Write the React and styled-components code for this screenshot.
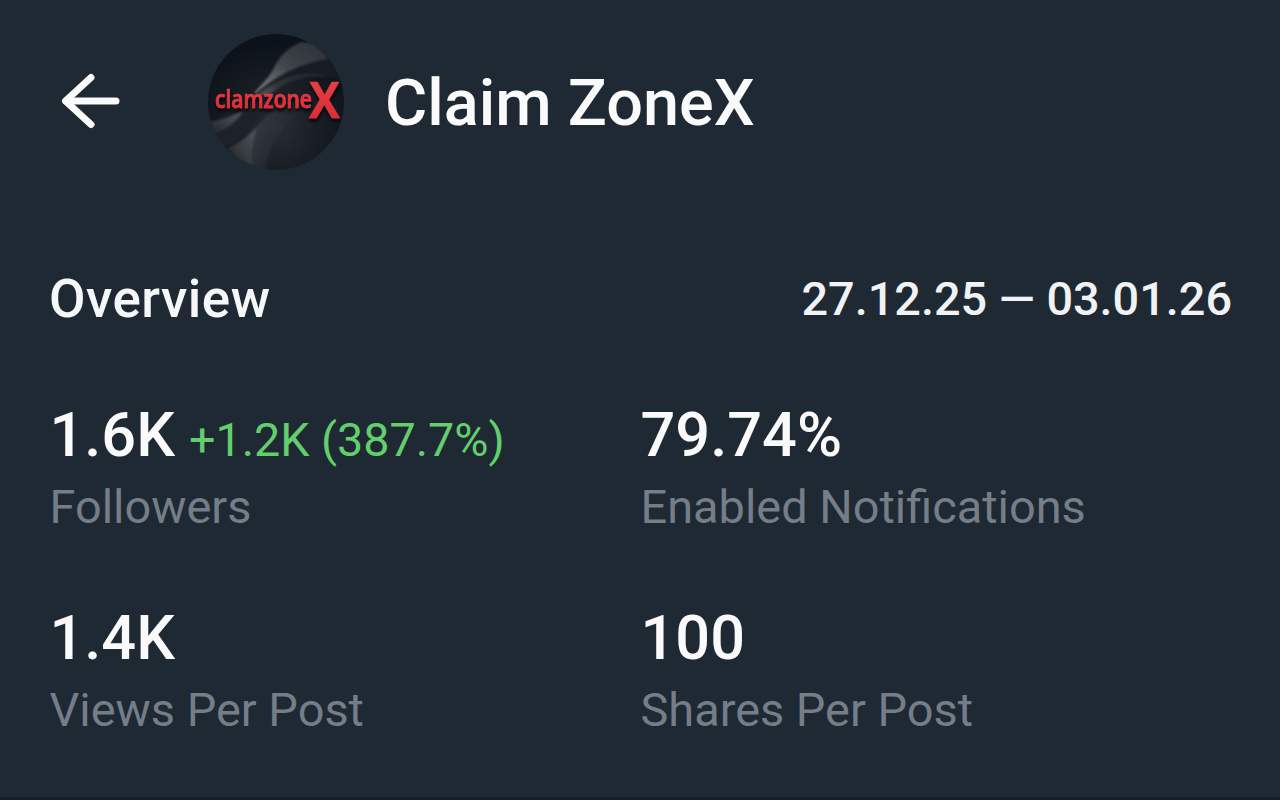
import styled, { createGlobalStyle } from "styled-components";

const stats = [
    { value: "1.6K", delta: "+1.2K (387.7%)", label: "Followers" },
    { value: "79.74%", label: "Enabled Notifications" },
    { value: "1.4K", label: "Views Per Post" },
    { value: "100", label: "Shares Per Post" },
];

const BackArrow = () => (
    <svg width="60" height="56" viewBox="0 0 60 56" fill="none" stroke="#fbfbfb" strokeWidth="7" strokeLinecap="round" strokeLinejoin="round">
        <path d="M31 4.5L5.5 28L31 51.5" />
        <path d="M6 28H56" />
    </svg>
);

const ChannelLogo = () => (
    <svg width="136" height="136" viewBox="0 0 136 136">
        <defs>
            <clipPath id="disc">
                <circle cx="68" cy="68" r="68" />
            </clipPath>
            <radialGradient id="base" cx="0.5" cy="0.68" r="0.62">
                <stop offset="0" stopColor="#292e34" />
                <stop offset="0.5" stopColor="#191e25" />
                <stop offset="1" stopColor="#0c1219" />
            </radialGradient>
            <linearGradient id="ribbon" x1="1" y1="0" x2="0" y2="1">
                <stop offset="0" stopColor="#262c31" />
                <stop offset="0.55" stopColor="#41464b" />
                <stop offset="1" stopColor="#85898c" />
            </linearGradient>
            <linearGradient id="ribbonLow" x1="1" y1="0" x2="0" y2="1">
                <stop offset="0" stopColor="#1e2329" />
                <stop offset="0.6" stopColor="#2d3237" />
                <stop offset="1" stopColor="#55595d" />
            </linearGradient>
            <linearGradient id="fold" x1="1" y1="0" x2="0" y2="1">
                <stop offset="0" stopColor="#555a5f" />
                <stop offset="1" stopColor="#1c2228" />
            </linearGradient>
            <linearGradient id="glow" x1="0" y1="0" x2="1" y2="0.4">
                <stop offset="0" stopColor="#3b4147" />
                <stop offset="1" stopColor="#20262c" stopOpacity="0" />
            </linearGradient>
            <linearGradient id="red" x1="0" y1="0" x2="0" y2="1">
                <stop offset="0" stopColor="#e8484e" />
                <stop offset="1" stopColor="#d9262c" />
            </linearGradient>
            <filter id="soft">
                <feGaussianBlur stdDeviation="0.8" />
            </filter>
            <filter id="shadow" x="-10%" y="-20%" width="120%" height="150%">
                <feDropShadow dx="0.5" dy="3" stdDeviation="1.6" floodColor="#020407" floodOpacity="1" />
            </filter>
        </defs>
        <g clipPath="url(#disc)">
            <rect width="136" height="136" fill="url(#base)" />
            <g filter="url(#soft)">
                <path d="M47 58C56 48 61 43 66 34C71 22 80 14 93 8L118 10L126 24C98 28 73 37 47 60Z" fill="url(#ribbon)" />
                <path d="M50 60C73 38 98 28 126 25L136 48C112 36 78 40 50 61Z" fill="#171c22" />
                <path d="M50 60C72 42 98 33 124 44C100 40 78 46 60 62Z" fill="url(#ribbonLow)" />
                <path d="M0 88C13 86 24 82 35 77C29 87 20 95 7 100Z" fill="url(#fold)" />
                <path d="M8 101C22 95 29 86 36 79L58 80C46 92 35 103 17 113Z" fill="#1d2329" />
                <path d="M20 114C34 108 41 101 49 93C46 105 43 116 44 132L28 124Z" fill="url(#fold)" />
                <path d="M49 93C54 86 61 80 70 74L100 76C78 86 62 106 58 136L44 132C43 116 46 105 49 93Z" fill="url(#glow)" />
            </g>
            <g fontFamily='"Open Sans", "Noto Sans", sans-serif' fill="url(#red)" filter="url(#shadow)">
                <text x="7" y="73.5" fontSize="25" fontWeight="600" textLength="97" lengthAdjust="spacingAndGlyphs" stroke="#e2383e" strokeWidth="0.7">clamzone</text>
                <text x="101" y="83.5" fontSize="50" fontWeight="700" textLength="31" lengthAdjust="spacingAndGlyphs" stroke="#e2383e" strokeWidth="0.4">X</text>
            </g>
        </g>
    </svg>
);

const App = () => {
    return (
        <>
            <GlobalStyle />
            <Page>
                <Header>
                    <BackButton aria-label="Back">
                        <BackArrow />
                    </BackButton>
                    <Avatar>
                        <ChannelLogo />
                    </Avatar>
                    <Title>Claim ZoneX</Title>
                </Header>

                <SectionHeader>
                    <SectionTitle>Overview</SectionTitle>
                    <DateRange>27.12.25 — 03.01.26</DateRange>
                </SectionHeader>

                <StatGrid>
                    {stats.map((stat) => (
                        <Stat key={stat.label}>
                            <Figures>
                                <Value>{stat.value}</Value>
                                {stat.delta && <Delta>{stat.delta}</Delta>}
                            </Figures>
                            <Label>{stat.label}</Label>
                        </Stat>
                    ))}
                </StatGrid>
            </Page>
        </>
    );
};

const GlobalStyle = createGlobalStyle`
    * {
        box-sizing: border-box;
    }
    body {
        margin: 0;
        background: #1f2933;
        font-family: Roboto, "Liberation Sans", sans-serif;
    }
    h1, h2, p {
        margin: 0;
    }
`

const Page = styled.main`
    width: 1280px;
    height: 800px;
    overflow: hidden;
    background: #1f2933;
    border-bottom: 3px solid #191d29;
    white-space: nowrap;
`

const Header = styled.header`
    display: flex;
    align-items: center;
    height: 204px;
    padding-left: 60px;
`

const BackButton = styled.button`
    display: flex;
    width: 60px;
    padding: 0 0 2px;
    border: 0;
    background: none;
    margin-right: 88px;
`

const Avatar = styled.div`
    display: flex;
    width: 136px;
    height: 136px;
    margin-right: 41px;
`

const Title = styled.h1`
    padding-top: 2px;
    font-size: 64.8px;
    font-weight: 500;
    line-height: 80px;
    color: #fafafa;
`

const SectionHeader = styled.div`
    display: flex;
    align-items: center;
    justify-content: space-between;
    height: 60px;
    margin-top: 65px;
    padding: 0 48px 0 49px;
`

const SectionTitle = styled.h2`
    font-size: 53px;
    font-weight: 500;
    letter-spacing: 0.5px;
    color: #f6f7f8;
`

const DateRange = styled.p`
    font-size: 46.8px;
    font-weight: 500;
    color: #f1f2f3;
`

const StatGrid = styled.div`
    display: grid;
    grid-template-columns: 591px 1fr;
    row-gap: 67px;
    margin-top: 70px;
    padding-left: 49.5px;
`

const Stat = styled.div`
    display: flex;
    flex-direction: column;
    gap: 8px;
`

const Figures = styled.div`
    display: flex;
    align-items: baseline;
    gap: 14px;
    height: 72px;
    line-height: 72px;
`

const Value = styled.span`
    font-size: 61.3px;
    font-weight: 500;
    color: #fafafa;
`

const Delta = styled.span`
    font-size: 46.7px;
    color: #63ce6c;
`

const Label = styled.p`
    font-size: 46.9px;
    line-height: 56px;
    color: #747d88;
`

export default App;
